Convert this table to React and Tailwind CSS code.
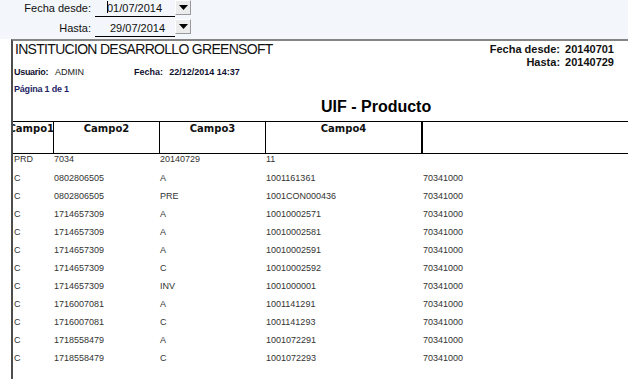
import React from "react";

const rows = [
  ["C", "0802806505", "A", "1001161361", "70341000"],
  ["C", "0802806505", "PRE", "1001CON000436", "70341000"],
  ["C", "1714657309", "A", "10010002571", "70341000"],
  ["C", "1714657309", "A", "10010002581", "70341000"],
  ["C", "1714657309", "A", "10010002591", "70341000"],
  ["C", "1714657309", "C", "10010002592", "70341000"],
  ["C", "1714657309", "INV", "1001000001", "70341000"],
  ["C", "1716007081", "A", "1001141291", "70341000"],
  ["C", "1716007081", "C", "1001141293", "70341000"],
  ["C", "1718558479", "A", "1001072291", "70341000"],
  ["C", "1718558479", "C", "1001072293", "70341000"],
];

function DropButton() {
  return (
    <div className="w-[16px] h-[15px] bg-[#ececec] border-t border-l border-t-white border-l-white border-b border-r border-b-[#9a9a9a] border-r-[#9a9a9a] flex items-center justify-center">
      <svg width="9" height="5" viewBox="0 0 9 5">
        <polygon points="0,0 9,0 4.5,5" fill="#000" />
      </svg>
    </div>
  );
}

export default function App() {
  return (
    <div className="w-[628px] h-[379px] overflow-hidden bg-white text-black font-['Liberation_Sans',Arial,sans-serif]">
      {/* Top filter bar */}
      <div className="h-[39px] bg-[#f3f6fa] flex flex-col text-[11px] text-[#111]">
        <div className="flex h-[17px]">
          <div className="w-[91px] text-right leading-[17px]">Fecha desde:</div>
          <div className="ml-[4px] w-[80px] h-[17px] border-b border-black flex items-center pl-[12px] leading-[16px]">
            <span className="relative">
              <span className="absolute left-0 top-[1px] w-[1px] h-[12px] bg-black" />
              01/07/2014
            </span>
          </div>
          <DropButton />
        </div>
        <div className="flex h-[18px] mt-[2px]">
          <div className="w-[91px] text-right leading-[18px]">Hasta:</div>
          <div className="ml-[4px] w-[80px] h-[18px] border-b border-black flex items-center pl-[15px] leading-[16px]">
            29/07/2014
          </div>
          <DropButton />
        </div>
      </div>

      {/* Report panel */}
      <div className="ml-[11px] h-[340px] border-t-2 border-l-2 border-t-[#858585] border-l-[#4d4d4d] flex flex-col">
        <div className="flex justify-between items-start">
          <div className="flex flex-col">
            <div className="pl-[2px] text-[14px] leading-[16px] tracking-[-0.7px] text-[#111]">
              INSTITUCION DESARROLLO GREENSOFT
            </div>
            <div className="mt-[10px] flex text-[9px] leading-[11px] pl-[1px]">
              <span className="font-bold text-[#101030] tracking-[-0.3px]">Usuario:</span>
              <span className="ml-[7px] text-[#222]">ADMIN</span>
              <span className="ml-[50px] font-bold text-[#101030]">Fecha:</span>
              <span className="ml-[6px] font-bold text-[#101030]">22/12/2014 14:37</span>
            </div>
            <div className="mt-[6px] pl-[1px] text-[9px] leading-[11px] font-bold text-[#1f1f66] tracking-[-0.2px]">
              Página 1 de 1
            </div>
          </div>
          <div className="pt-[1.5px] pr-[14px] grid grid-cols-[auto_auto] content-start gap-x-[5px] text-[11px] leading-[13px] font-bold text-[#111]">
            <div className="text-right">Fecha desde:</div>
            <div>20140701</div>
            <div className="text-right">Hasta:</div>
            <div>20140729</div>
          </div>
        </div>

        <div className="mt-[3px] pl-[308px] text-[16px] leading-[18px] font-bold text-black">
          UIF - Producto
        </div>

        {/* Table header */}
        <div className="mt-[5px] h-[33px] border-t border-b border-black flex font-['DejaVu_Sans',Verdana,sans-serif] text-[10px] font-bold leading-[12px] text-[#111]">
          <div className="w-[41px] border-r border-black overflow-hidden flex justify-end pt-[1px] whitespace-nowrap">
            <span className="mr-[-1px]">Campo1</span>
          </div>
          <div className="w-[106px] border-r border-black flex justify-center pt-[1px]">Campo2</div>
          <div className="w-[106px] border-r border-black flex justify-center pt-[1px]">Campo3</div>
          <div className="w-[157px] border-r-2 border-black flex justify-center pt-[1px]">Campo4</div>
          <div className="flex-1" />
        </div>

        {/* Data */}
        <div className="text-[9px] text-[#333]">
          <div className="grid grid-cols-[41px_106px_106px_157px_1fr] h-[11px] leading-[11px]">
            <div className="pl-[1px]">PRD</div>
            <div>7034</div>
            <div>20140729</div>
            <div>11</div>
            <div />
          </div>
          <div className="mt-[4px]">
            {rows.map((r, i) => (
              <div
                key={i}
                className="grid grid-cols-[41px_106px_106px_157px_1fr] h-[18px] leading-[18px]"
              >
                <div className="pl-[1px]">{r[0]}</div>
                <div>{r[1]}</div>
                <div>{r[2]}</div>
                <div>{r[3]}</div>
                <div>{r[4]}</div>
              </div>
            ))}
          </div>
        </div>
      </div>
    </div>
  );
}
